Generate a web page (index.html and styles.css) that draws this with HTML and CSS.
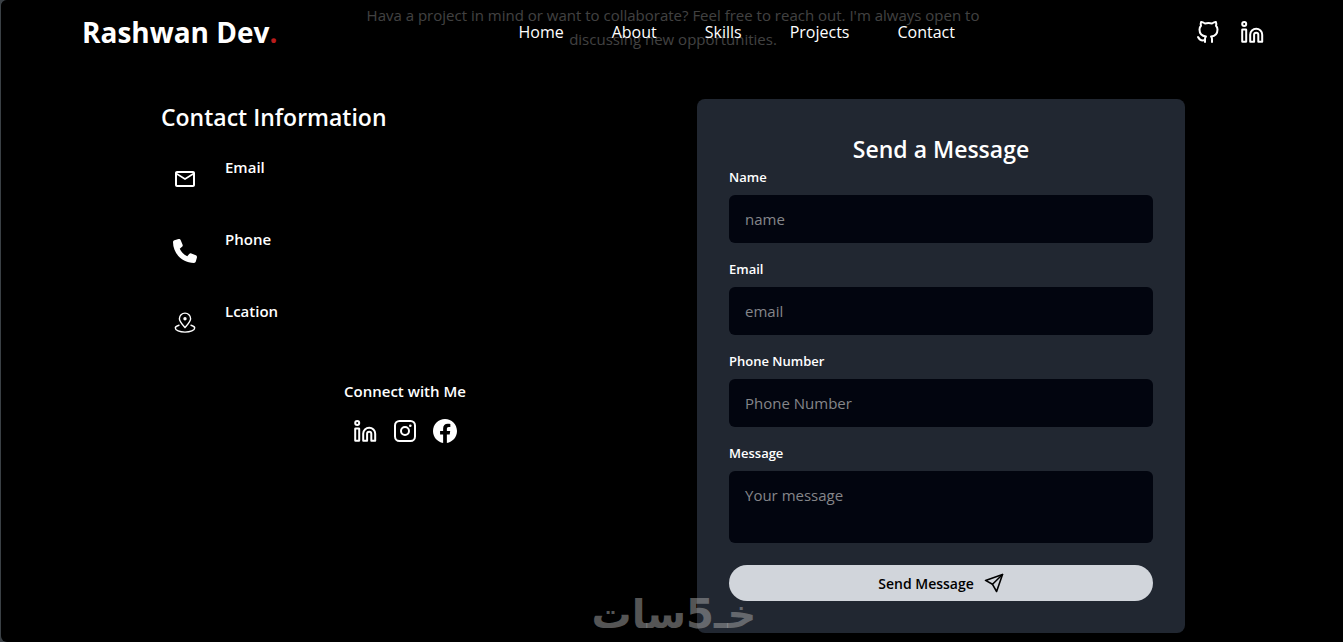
FILE: index.html
```html
<!DOCTYPE html>
<html lang="en">
<head>
    <meta charset="UTF-8">
    <meta name="viewport" content="width=device-width, initial-scale=1.0">
    <title>Rashwan Dev</title>
    <link rel="stylesheet" href="styles.css">
</head>
<body>
    <svg class="sprite" aria-hidden="true">
        <symbol id="icon-linkedin" viewBox="0 0 24 24">
            <g fill="none" stroke="currentColor" stroke-width="2" stroke-linejoin="round">
                <circle cx="4.2" cy="4" r="2"/>
                <rect x="2.2" y="9.4" width="4" height="12.4" rx=".4"/>
                <path d="M10.2 21.8v-7a6 6 0 0 1 12 0v7h-3.9v-7a2.1 2.1 0 0 0-4.2 0v7z"/>
            </g>
        </symbol>
    </svg>

    <div class="page">
        <header class="header">
            <a class="logo" href="#home">Rashwan Dev<span class="logo-dot">.</span></a>
            <nav class="nav">
                <a href="#home">Home</a>
                <a href="#about">About</a>
                <a href="#skills">Skills</a>
                <a href="#projects">Projects</a>
                <a href="#contact">Contact</a>
            </nav>
            <div class="header-social">
                <a href="#github" aria-label="GitHub">
                    <svg class="icon" viewBox="0 0 24 24" fill="none" stroke="currentColor" stroke-width="2" stroke-linecap="round" stroke-linejoin="round">
                        <path d="M16 22.03v-2.87a3.4 3.4 0 0 0-.94-2.61c3.14-.35 6.44-1.54 6.44-7A5.4 5.4 0 0 0 20 5.8a5 5 0 0 0-.09-3.77S18.73 1.68 16 3.5a13.4 13.4 0 0 0-7 0C6.27 1.68 5.09 2.03 5.09 2.03A5 5 0 0 0 5 5.8a5.4 5.4 0 0 0-1.5 3.78c0 5.42 3.3 6.6 6.44 7A3.4 3.4 0 0 0 9 19.16v2.87"/>
                        <path d="M9 20.03c-3 .97-5.5 0-7-3"/>
                    </svg>
                </a>
                <a href="#linkedin" aria-label="LinkedIn"><svg class="icon"><use href="#icon-linkedin"/></svg></a>
            </div>
        </header>

        <main class="contact" id="contact">
            <p class="intro">Hava a project in mind or want to collaborate? Feel free to reach out. I'm always open to discussing new opportunities.</p>

            <div class="contact-grid">
                <section class="info">
                    <h2 class="title">Contact Information</h2>
                    <ul class="info-list">
                        <li class="info-item">
                            <span class="info-icon">
                                <svg class="icon" viewBox="0 0 24 24" fill="currentColor"><path d="M22 6c0-1.1-.9-2-2-2H4c-1.1 0-2 .9-2 2v12c0 1.1.9 2 2 2h16c1.1 0 2-.9 2-2V6zm-2 0l-8 5-8-5h16zm0 12H4V8l8 5 8-5v10z"/></svg>
                            </span>
                            <h3 class="info-name">Email</h3>
                        </li>
                        <li class="info-item">
                            <span class="info-icon">
                                <svg class="icon" viewBox="0 0 512 512" fill="currentColor"><path d="M164.9 24.6c-7.7-18.6-28-28.5-47.4-23.2l-88 24C12.1 30.2 0 46 0 64c0 247.4 200.6 448 448 448 18 0 33.8-12.1 38.6-29.5l24-88c5.3-19.4-4.6-39.7-23.2-47.4l-96-40c-16.3-6.8-35.2-2.1-46.3 11.6L304.7 368C234.3 334.7 177.3 277.7 144 207.3L193.3 167c13.7-11.2 18.4-30 11.6-46.3l-40-96z"/></svg>
                            </span>
                            <h3 class="info-name">Phone</h3>
                        </li>
                        <li class="info-item">
                            <span class="info-icon">
                                <svg class="icon" viewBox="0 0 24 24" fill="none" stroke="currentColor" stroke-width="1.4" stroke-linecap="round">
                                    <path d="M12 16.5C9.5 13.6 6.4 10.6 6.4 7.7a5.6 5.6 0 0 1 11.2 0c0 2.9-3.1 5.9-5.6 8.8z"/>
                                    <circle cx="12" cy="7.7" r="1" fill="currentColor"/>
                                    <path d="M6 14.3c-2.3.6-3.7 1.6-3.7 2.8 0 2.2 4.3 4 9.7 4s9.7-1.8 9.7-4c0-1.2-1.4-2.2-3.7-2.8"/>
                                </svg>
                            </span>
                            <h3 class="info-name">Lcation</h3>
                        </li>
                    </ul>
                    <div class="connect">
                        <h3 class="info-name">Connect with Me</h3>
                        <div class="connect-links">
                            <a href="#linkedin" aria-label="LinkedIn"><svg class="icon"><use href="#icon-linkedin"/></svg></a>
                            <a href="#instagram" aria-label="Instagram">
                                <svg class="icon" viewBox="0 0 24 24" fill="none" stroke="currentColor" stroke-width="2">
                                    <rect x="2" y="2" width="20" height="20" rx="4.5"/>
                                    <circle cx="12" cy="12" r="4"/>
                                    <circle cx="17.3" cy="6.7" r="1.3" fill="currentColor" stroke="none"/>
                                </svg>
                            </a>
                            <a href="#facebook" aria-label="Facebook">
                                <svg class="icon" viewBox="0 0 24 24" fill="currentColor"><path d="M24 12.07C24 5.4 18.63 0 12 0S0 5.4 0 12.07C0 18.1 4.39 23.1 10.13 24v-8.44H7.08v-3.49h3.05V9.41c0-3.02 1.79-4.69 4.53-4.69 1.31 0 2.68.24 2.68.24v2.97h-1.51c-1.49 0-1.96.93-1.96 1.89v2.25h3.33l-.53 3.49h-2.8V24C19.61 23.1 24 18.1 24 12.07z"/></svg>
                            </a>
                        </div>
                    </div>
                </section>

                <form class="card">
                    <h2 class="title card-title">Send a Message</h2>
                    <div class="field">
                        <label for="name">Name</label>
                        <input type="text" id="name" placeholder="name">
                    </div>
                    <div class="field">
                        <label for="email">Email</label>
                        <input type="email" id="email" placeholder="email">
                    </div>
                    <div class="field">
                        <label for="phone">Phone Number</label>
                        <input type="tel" id="phone" placeholder="Phone Number">
                    </div>
                    <div class="field">
                        <label for="message">Message</label>
                        <textarea id="message" placeholder="Your message"></textarea>
                    </div>
                    <button class="send-btn" type="submit">
                        Send Message
                        <svg class="send-icon" viewBox="0 0 20 20" fill="none" stroke="currentColor" stroke-width="1.6" stroke-linejoin="round" stroke-linecap="round">
                            <path d="M18.5 1.5 1.5 7.4l7 3.9 4.1 7.2z"/>
                            <path d="M18.5 1.5 8.5 11.3"/>
                        </svg>
                    </button>
                </form>
            </div>
        </main>

        <div class="watermark" lang="ar" dir="rtl">خـ5سات</div>
    </div>
</body>
</html>
```
FILE: styles.css
```css
* {
    box-sizing: border-box;
    margin: 0;
    padding: 0;
}
html {
    background: #3a4045;
}
body {
    font-family: "Open Sans", "Noto Sans", sans-serif;
    font-size: 15px;
    line-height: 24px;
    color: #fff;
}
a {
    color: inherit;
    text-decoration: none;
}
.sprite {
    position: absolute;
    width: 0;
    height: 0;
}
.icon {
    display: block;
    width: 24px;
    height: 24px;
}
.page {
    position: relative;
    min-height: 100vh;
    margin-left: 1px;
    padding: 3px 15px 9px 17px;
    background: #000;
    border-radius: 6px 0 0 6px;
}

/* header */
.header {
    position: absolute;
    top: 0;
    left: 0;
    right: 0;
    z-index: 10;
    display: flex;
    justify-content: space-between;
    align-items: center;
    height: 64px;
    padding: 0 79px 0 81px;
    background: rgba(0, 0, 0, 0.6);
    border-radius: 6px 0 0 0;
}
.logo {
    font-size: 28px;
    font-weight: 700;
    line-height: 36px;
}
.logo-dot {
    color: #b91c1c;
}
.nav {
    display: flex;
    gap: 48px;
    font-size: 16px;
}
.header-social {
    display: flex;
    gap: 20px;
}

/* contact */
.contact {
    max-width: 1024px;
    margin: 0 auto;
}
.intro {
    max-width: 672px;
    margin: 0 auto 48px;
    color: #a3a3a3;
    text-align: center;
}
.contact-grid {
    display: grid;
    grid-template-columns: 1fr 1fr;
    gap: 48px;
}
.title {
    font-size: 23px;
    font-weight: 600;
    line-height: 36px;
}
.info-list {
    display: flex;
    flex-direction: column;
    gap: 24px;
    margin-top: 20px;
    list-style: none;
}
.info-item {
    display: flex;
    gap: 16px;
}
.info-icon {
    padding: 12px;
}
.info-name {
    font-size: 15px;
    font-weight: 600;
}
.connect {
    margin-top: 32px;
    text-align: center;
}
.connect-links {
    display: flex;
    justify-content: center;
    gap: 16px;
    margin-top: 16px;
}

/* form */
.card {
    display: flex;
    flex-direction: column;
    gap: 16px;
    padding: 32px;
    background: #212731;
    border-radius: 8px;
}
.card-title {
    margin-bottom: -16px;
    text-align: center;
}
.field label {
    display: block;
    margin-bottom: 8px;
    font-size: 13px;
    font-weight: 600;
    line-height: 20px;
}
.field input,
.field textarea {
    display: block;
    width: 100%;
    height: 48px;
    padding: 12px 16px;
    font: inherit;
    color: #fff;
    background: #02050f;
    border: none;
    border-radius: 6px;
}
.field textarea {
    height: 72px;
    resize: none;
}
.field input::placeholder,
.field textarea::placeholder {
    color: #85868a;
}
.send-btn {
    display: flex;
    justify-content: center;
    align-items: center;
    gap: 10px;
    height: 36px;
    margin-top: 6px;
    font-family: inherit;
    font-size: 14px;
    font-weight: 600;
    color: #000;
    background: #d1d5db;
    border: none;
    border-radius: 18px;
    cursor: pointer;
}
.send-icon {
    width: 20px;
    height: 20px;
}

/* watermark */
.watermark {
    position: absolute;
    bottom: 6px;
    left: 44%;
    font-family: "DejaVu Sans", sans-serif;
    font-size: 40px;
    font-weight: 700;
    line-height: 44px;
    color: rgba(170, 170, 170, 0.5);
    pointer-events: none;
}
```
